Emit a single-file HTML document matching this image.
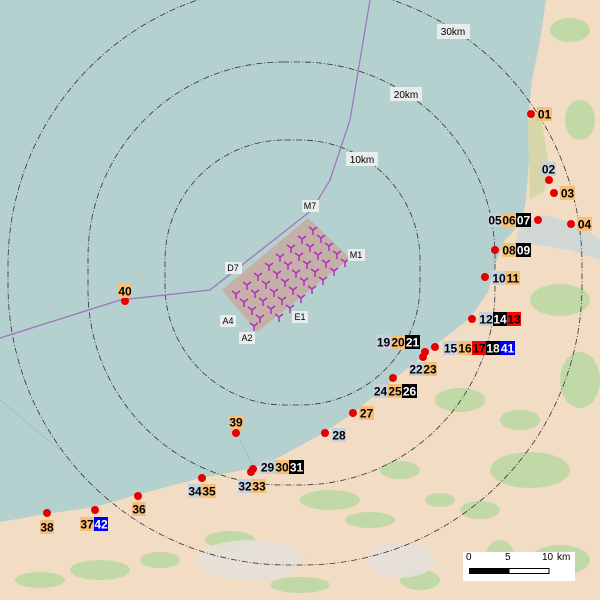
<!DOCTYPE html>
<html><head><meta charset="utf-8"><style>
html,body{margin:0;padding:0;}
body{width:600px;height:600px;overflow:hidden;font-family:"Liberation Sans",sans-serif;}
svg text{font-family:"Liberation Sans",sans-serif;}
</style></head><body>
<svg width="600" height="600" viewBox="0 0 600 600" xmlns="http://www.w3.org/2000/svg">
<defs>
<g id="t"><path d="M0 0 L-4 -3 M0 0 L4 -3 M0 0 L0 5" stroke="#b030c0" stroke-width="1.5" fill="none"/></g>
<g id="dot"><circle r="4" fill="#e80000"/></g>
</defs>
<rect width="600" height="600" fill="#b4d0cf"/>
<!-- land -->
<path d="M0 522 L45 514 L95 507 L140 494 L200 478 L250 469 L272 461 L320 435 L355 412 L395 378 L425 355 L442 340 L470 318 L488 292 L496 262 L505 240 L522 222 L526 200 L529 160 L528 120 L532 80 L540 40 L546 0 L600 0 L600 600 L0 600 Z" fill="#f2dcc4"/>
<path d="M528 120 L540 110 L548 160 L545 190 L530 200 Z" fill="#d7d6a8"/>
<path d="M520 225 L545 215 L580 225 L600 240 L600 260 L570 250 L540 245 L515 245 Z" fill="#c7d6d8" opacity="0.8"/>
<g fill="#b9d8a2" opacity="0.85">
<ellipse cx="330" cy="500" rx="30" ry="10"/><ellipse cx="460" cy="400" rx="25" ry="12"/><ellipse cx="530" cy="470" rx="40" ry="18"/>
<ellipse cx="560" cy="300" rx="30" ry="16"/><ellipse cx="400" cy="470" rx="20" ry="9"/><ellipse cx="230" cy="540" rx="25" ry="9"/>
<ellipse cx="100" cy="570" rx="30" ry="10"/><ellipse cx="580" cy="380" rx="20" ry="28"/><ellipse cx="480" cy="510" rx="20" ry="9"/>
<ellipse cx="370" cy="520" rx="25" ry="8"/><ellipse cx="440" cy="500" rx="15" ry="7"/><ellipse cx="160" cy="560" rx="20" ry="8"/>
<ellipse cx="40" cy="580" rx="25" ry="8"/><ellipse cx="300" cy="585" rx="30" ry="8"/><ellipse cx="560" cy="560" rx="30" ry="15"/>
<ellipse cx="520" cy="420" rx="20" ry="10"/><ellipse cx="580" cy="120" rx="15" ry="20"/><ellipse cx="570" cy="30" rx="20" ry="12"/>
<ellipse cx="500" cy="560" rx="15" ry="20"/><ellipse cx="420" cy="580" rx="20" ry="10"/>
</g>
<g fill="#e6e0d8" opacity="0.9"><ellipse cx="250" cy="560" rx="55" ry="20"/><ellipse cx="400" cy="560" rx="35" ry="18"/><ellipse cx="470" cy="345" rx="25" ry="8"/></g>
<!-- buffers -->
<g fill="none" stroke="#333" stroke-width="0.8" stroke-dasharray="6 2 1 2">
<rect x="165" y="140" width="255" height="265" rx="120"/>
<rect x="88" y="62" width="407" height="423" rx="195"/>
<rect x="8" y="-15" width="574" height="580" rx="280"/>
</g>
<path d="M0 400 L60 450 M240 440 L255 470" stroke="#8aa" stroke-width="0.5" fill="none"/>
<!-- purple line -->
<path d="M370 0 L360 60 L350 120 L330 180 L312 210 L210 290 L120 300 L0 338" stroke="#a070c0" stroke-width="1.2" fill="none"/>
<!-- farm -->
<path d="M222 290 L308 218 L350 258 L257 332 Z" fill="#c4b0a8"/>
<g>
<use href="#t" x="236" y="294"/><use href="#t" x="247" y="285"/><use href="#t" x="258" y="276"/><use href="#t" x="269" y="266"/><use href="#t" x="280" y="257"/><use href="#t" x="291" y="248"/><use href="#t" x="302" y="239"/><use href="#t" x="313" y="230"/>
<use href="#t" x="244" y="302"/><use href="#t" x="255" y="293"/><use href="#t" x="266" y="284"/><use href="#t" x="277" y="274"/><use href="#t" x="288" y="265"/><use href="#t" x="299" y="256"/><use href="#t" x="310" y="247"/><use href="#t" x="321" y="238"/>
<use href="#t" x="252" y="310"/><use href="#t" x="263" y="301"/><use href="#t" x="274" y="292"/><use href="#t" x="285" y="282"/><use href="#t" x="296" y="273"/><use href="#t" x="307" y="264"/><use href="#t" x="318" y="255"/><use href="#t" x="329" y="246"/>
<use href="#t" x="260" y="318"/><use href="#t" x="271" y="309"/><use href="#t" x="282" y="300"/><use href="#t" x="293" y="290"/><use href="#t" x="304" y="281"/><use href="#t" x="315" y="272"/><use href="#t" x="326" y="263"/><use href="#t" x="337" y="254"/>
<use href="#t" x="254" y="326"/><use href="#t" x="279" y="317"/><use href="#t" x="290" y="308"/><use href="#t" x="301" y="298"/><use href="#t" x="312" y="289"/><use href="#t" x="323" y="280"/><use href="#t" x="334" y="271"/><use href="#t" x="345" y="262"/>
</g>
<!-- small labels -->
<g font-size="9" text-anchor="middle" fill="#000">
<rect x="437" y="24" width="33" height="15" fill="#e8ecec"/><text x="453" y="35" font-size="10">30km</text>
<rect x="390" y="87" width="32" height="14" fill="#e8ecec"/><text x="406" y="98" font-size="10">20km</text>
<rect x="346" y="152" width="32" height="14" fill="#e8ecec"/><text x="362" y="163" font-size="10">10km</text>
<rect x="302" y="200" width="17" height="12" fill="#e8ecec"/><text x="310" y="209">M7</text>
<rect x="225" y="262" width="17" height="12" fill="#e8ecec"/><text x="233" y="271">D7</text>
<rect x="348" y="249" width="17" height="12" fill="#e8ecec"/><text x="356" y="258">M1</text>
<rect x="292" y="311" width="16" height="12" fill="#e8ecec"/><text x="300" y="320">E1</text>
<rect x="220" y="315" width="16" height="12" fill="#e8ecec"/><text x="228" y="324">A4</text>
<rect x="239" y="332" width="16" height="12" fill="#e8ecec"/><text x="247" y="341">A2</text>
</g>
<!-- dots -->
<g>
<use href="#dot" x="531" y="114"/><use href="#dot" x="549" y="180"/><use href="#dot" x="554" y="193"/><use href="#dot" x="571" y="224"/>
<use href="#dot" x="538" y="220"/><use href="#dot" x="495" y="250"/><use href="#dot" x="485" y="277"/><use href="#dot" x="472" y="319"/>
<use href="#dot" x="435" y="347"/><use href="#dot" x="425" y="352"/><use href="#dot" x="423" y="357"/><use href="#dot" x="393" y="378"/>
<use href="#dot" x="353" y="413"/><use href="#dot" x="325" y="433"/><use href="#dot" x="253" y="469"/><use href="#dot" x="251" y="472"/>
<use href="#dot" x="202" y="478"/><use href="#dot" x="138" y="496"/><use href="#dot" x="95" y="510"/><use href="#dot" x="47" y="513"/>
<use href="#dot" x="236" y="433"/><use href="#dot" x="125" y="301"/>
</g>
<!-- number labels -->
<g font-size="12" font-weight="bold" text-anchor="middle">
<rect x="537" y="107" width="15" height="14" fill="#f5bf78"/><text x="544.5" y="118.5">01</text>
<rect x="541" y="162" width="15" height="14" fill="#c5d1de"/><text x="548.5" y="173.5">02</text>
<rect x="560" y="186" width="15" height="14" fill="#f5bf78"/><text x="567.5" y="197.5">03</text>
<rect x="577" y="217" width="15" height="14" fill="#f5bf78"/><text x="584.5" y="228.5">04</text>
<rect x="488" y="213" width="14" height="14" fill="#c5d1de"/><text x="495" y="224.5">05</text>
<rect x="502" y="213" width="14" height="14" fill="#f5bf78"/><text x="509" y="224.5">06</text>
<rect x="516" y="213" width="15" height="14" fill="#000"/><text x="523.5" y="224.5" fill="#fff">07</text>
<rect x="502" y="243" width="14" height="14" fill="#f5bf78"/><text x="509" y="254.5">08</text>
<rect x="516" y="243" width="15" height="14" fill="#000"/><text x="523.5" y="254.5" fill="#fff">09</text>
<rect x="492" y="271" width="14" height="14" fill="#c5d1de"/><text x="499" y="282.5">10</text>
<rect x="506" y="271" width="14" height="14" fill="#f5bf78"/><text x="513" y="282.5">11</text>
<rect x="479" y="312" width="14" height="14" fill="#c5d1de"/><text x="486" y="323.5">12</text>
<rect x="493" y="312" width="14" height="14" fill="#000"/><text x="500" y="323.5" fill="#fff">14</text>
<rect x="507" y="312" width="14" height="14" fill="#f00"/><text x="514" y="323.5">13</text>
<rect x="443" y="341" width="15" height="14" fill="#c5d1de"/><text x="450.5" y="352.5">15</text>
<rect x="458" y="341" width="14" height="14" fill="#f5bf78"/><text x="465" y="352.5">16</text>
<rect x="472" y="341" width="14" height="14" fill="#f00"/><text x="479" y="352.5">17</text>
<rect x="486" y="341" width="14" height="14" fill="#000"/><text x="493" y="352.5" fill="#fff">18</text>
<rect x="500" y="341" width="15" height="14" fill="#0000f0"/><text x="507.5" y="352.5" fill="#fff">41</text>
<rect x="376" y="335" width="15" height="14" fill="#c5d1de"/><text x="383.5" y="346.5">19</text>
<rect x="391" y="335" width="14" height="14" fill="#f5bf78"/><text x="398" y="346.5">20</text>
<rect x="405" y="335" width="15" height="14" fill="#000"/><text x="412.5" y="346.5" fill="#fff">21</text>
<rect x="409" y="362" width="14" height="14" fill="#c5d1de"/><text x="416" y="373.5">22</text>
<rect x="423" y="362" width="14" height="14" fill="#f5bf78"/><text x="430" y="373.5">23</text>
<rect x="373" y="384" width="15" height="14" fill="#c5d1de"/><text x="380.5" y="395.5">24</text>
<rect x="388" y="384" width="14" height="14" fill="#f5bf78"/><text x="395" y="395.5">25</text>
<rect x="402" y="384" width="15" height="14" fill="#000"/><text x="409.5" y="395.5" fill="#fff">26</text>
<rect x="359" y="406" width="15" height="14" fill="#f5bf78"/><text x="366.5" y="417.5">27</text>
<rect x="332" y="428" width="14" height="14" fill="#c5d1de"/><text x="339" y="439.5">28</text>
<rect x="260" y="460" width="15" height="14" fill="#c5d1de"/><text x="267.5" y="471.5">29</text>
<rect x="275" y="460" width="14" height="14" fill="#f5bf78"/><text x="282" y="471.5">30</text>
<rect x="289" y="460" width="15" height="14" fill="#000"/><text x="296.5" y="471.5" fill="#fff">31</text>
<rect x="238" y="479" width="14" height="14" fill="#c5d1de"/><text x="245" y="490.5">32</text>
<rect x="252" y="479" width="14" height="14" fill="#f5bf78"/><text x="259" y="490.5">33</text>
<rect x="188" y="484" width="14" height="14" fill="#c5d1de"/><text x="195" y="495.5">34</text>
<rect x="202" y="484" width="14" height="14" fill="#f5bf78"/><text x="209" y="495.5">35</text>
<rect x="132" y="502" width="14" height="14" fill="#f5bf78"/><text x="139" y="513.5">36</text>
<rect x="80" y="517" width="14" height="14" fill="#f5bf78"/><text x="87" y="528.5">37</text>
<rect x="94" y="517" width="14" height="14" fill="#0000f0"/><text x="101" y="528.5" fill="#fff">42</text>
<rect x="40" y="520" width="14" height="14" fill="#f5bf78"/><text x="47" y="531.5">38</text>
<rect x="229" y="415" width="14" height="14" fill="#f5bf78"/><text x="236" y="426.5">39</text>
<rect x="118" y="284" width="14" height="14" fill="#f5bf78"/><text x="125" y="295.5">40</text>
</g>
<!-- scale -->
<rect x="463" y="552" width="112" height="29" fill="#fff"/>
<g font-size="10" fill="#000">
<text x="466" y="560">0</text><text x="505" y="560">5</text><text x="542" y="560">10</text><text x="557" y="560">km</text>
</g>
<rect x="469" y="568" width="40" height="6" fill="#000"/>
<rect x="509" y="568.5" width="40" height="5" fill="#fff" stroke="#000" stroke-width="1"/>
</svg>
</body></html>
